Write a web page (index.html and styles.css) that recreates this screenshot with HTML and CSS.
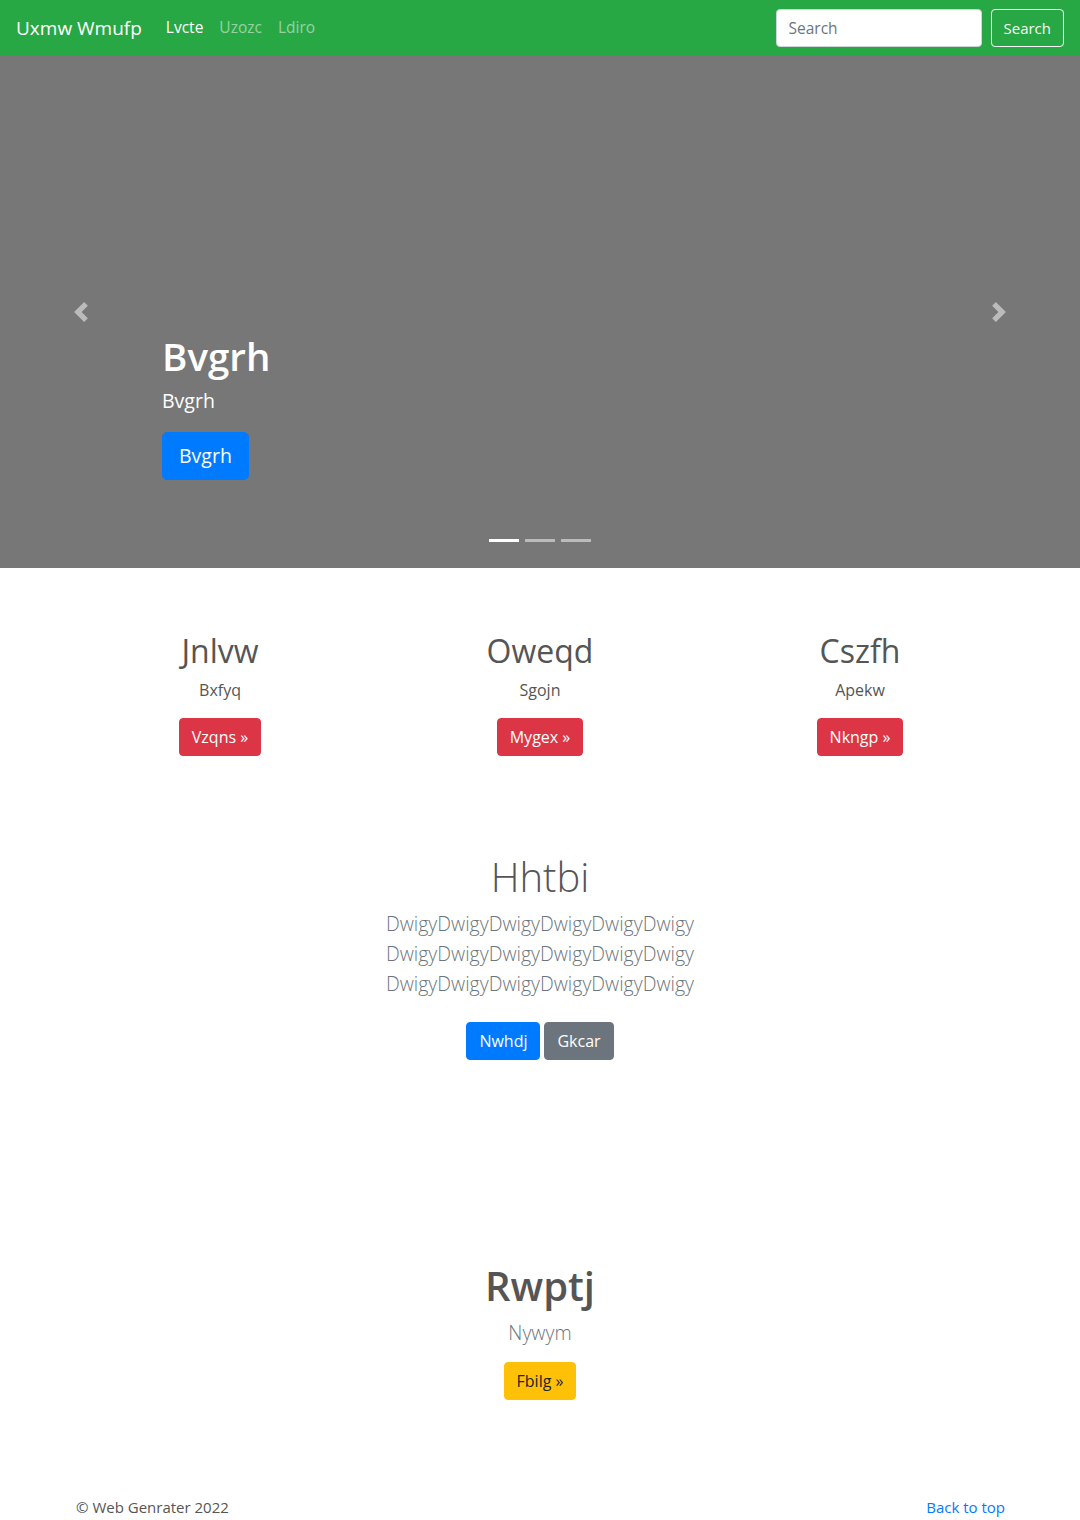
FILE: index.html
```html
<!DOCTYPE html>
<html lang="en">
<head>
<meta charset="utf-8">
<title>Uxmw Wmufp</title>
<link rel="stylesheet" href="styles.css">
</head>
<body>
<header class="navbar">
  <a class="brand" href="#">Uxmw Wmufp</a>
  <nav class="nav">
    <a class="nav-link active" href="#">Lvcte</a>
    <a class="nav-link" href="#">Uzozc</a>
    <a class="nav-link" href="#">Ldiro</a>
  </nav>
  <form class="search">
    <input class="search-input" type="text" placeholder="Search">
    <button class="btn btn-outline-light" type="button">Search</button>
  </form>
</header>

<section class="carousel">
  <div class="caption">
    <h1 class="caption-title">Bvgrh</h1>
    <p class="caption-text">Bvgrh</p>
    <a class="btn btn-lg btn-primary" href="#">Bvgrh</a>
  </div>
  <a class="control control-prev" href="#">
    <svg width="20" height="20" viewBox="0 0 8 8"><path fill="#fff" d="M5.25 0l-4 4 4 4 1.5-1.5L4.25 4l2.5-2.5L5.25 0z"/></svg>
  </a>
  <a class="control control-next" href="#">
    <svg width="20" height="20" viewBox="0 0 8 8"><path fill="#fff" d="M2.75 0l-1.5 1.5L3.75 4l-2.5 2.5L2.75 8l4-4-4-4z"/></svg>
  </a>
  <ol class="indicators">
    <li class="active"></li>
    <li></li>
    <li></li>
  </ol>
</section>

<main>
  <div class="container marketing">
    <div class="col">
      <h2 class="col-title">Jnlvw</h2>
      <p class="col-text">Bxfyq</p>
      <a class="btn btn-danger" href="#">Vzqns &raquo;</a>
    </div>
    <div class="col">
      <h2 class="col-title">Oweqd</h2>
      <p class="col-text">Sgojn</p>
      <a class="btn btn-danger" href="#">Mygex &raquo;</a>
    </div>
    <div class="col">
      <h2 class="col-title">Cszfh</h2>
      <p class="col-text">Apekw</p>
      <a class="btn btn-danger" href="#">Nkngp &raquo;</a>
    </div>
  </div>

  <section class="jumbotron">
    <div class="jumbo-inner">
      <h1 class="light-title">Hhtbi</h1>
      <p class="lead muted">DwigyDwigyDwigyDwigyDwigyDwigy DwigyDwigyDwigyDwigyDwigyDwigy DwigyDwigyDwigyDwigyDwigyDwigy</p>
      <p class="btn-row">
        <a class="btn btn-primary" href="#">Nwhdj</a>
        <a class="btn btn-secondary" href="#">Gkcar</a>
      </p>
    </div>
  </section>

  <section class="feature">
    <h1 class="feature-title">Rwptj</h1>
    <p class="lead muted">Nywym</p>
    <a class="btn btn-warning" href="#">Fbilg &raquo;</a>
  </section>
</main>

<footer class="footer">
  <div class="container footer-inner">
    <p class="copy">&copy; Web Genrater 2022</p>
    <a class="top-link" href="#">Back to top</a>
  </div>
</footer>
</body>
</html>
```

FILE: styles.css
```css
* { box-sizing: border-box; }

html, body {
  margin: 0;
  padding: 0;
}

body {
  font-family: "Open Sans", "Noto Sans", "Liberation Sans", sans-serif;
  font-size: 16px;
  line-height: 1.5;
  color: #555;
  background: #fff;
}

a { text-decoration: none; }

h1, h2, p { margin: 0; }

/* Navbar */
.navbar {
  height: 56px;
  background: #28a745;
  display: flex;
  align-items: center;
  padding: 8px 16px;
}

.brand {
  color: #fff;
  font-size: 19px;
  line-height: 30px;
  margin-right: 16px;
}

.nav {
  display: flex;
  flex: 1;
}

.nav-link {
  color: rgba(255, 255, 255, 0.5);
  padding: 8px;
  font-size: 15.5px;
}

.nav-link.active { color: #fff; }

.search {
  display: flex;
  align-items: center;
  gap: 9px;
}

.search-input {
  width: 206px;
  height: 38px;
  padding: 6px 12px;
  font-family: inherit;
  font-size: 15.5px;
  color: #495057;
  border: 1px solid #ced4da;
  border-radius: 4px;
  background: #fff;
}

.search-input::placeholder { color: #6c757d; }

/* Buttons */
.btn {
  display: inline-block;
  font-family: inherit;
  font-size: 16px;
  line-height: 24px;
  padding: 6px 12px;
  border: 1px solid transparent;
  border-radius: 4px;
  color: #fff;
  cursor: pointer;
}

.btn-lg {
  font-size: 19.5px;
  line-height: 30px;
  padding: 8px 16px;
  border-radius: 5px;
}

.btn-outline-light {
  background: transparent;
  border-color: #f8f9fa;
  color: #f8f9fa;
  font-size: 15px;
}

.btn-primary { background: #007bff; border-color: #007bff; }
.btn-secondary { background: #6c757d; border-color: #6c757d; }
.btn-danger { background: #dc3545; border-color: #dc3545; }
.btn-warning { background: #ffc107; border-color: #ffc107; color: #212529; }

/* Carousel */
.carousel {
  position: relative;
  height: 512px;
  background: #777;
  display: flex;
  flex-direction: column;
  justify-content: flex-end;
  padding: 0 15% 88px;
}

.caption { color: #fff; }

.caption-title {
  font-size: 38.5px;
  line-height: 48px;
  font-weight: 600;
  margin-bottom: 6px;
}

.caption-text {
  font-size: 19.5px;
  line-height: 30px;
  margin-bottom: 16px;
}

.control {
  position: absolute;
  top: 0;
  bottom: 0;
  width: 15%;
  display: flex;
  align-items: center;
  justify-content: center;
  opacity: 0.5;
}

.control-prev { left: 0; }
.control-next { right: 0; }

.indicators {
  position: absolute;
  left: 0;
  right: 0;
  bottom: 16px;
  margin: 0;
  padding: 0;
  list-style: none;
  display: flex;
  justify-content: center;
}

.indicators li {
  width: 30px;
  height: 23px;
  margin: 0 3px;
  border-top: 10px solid transparent;
  border-bottom: 10px solid transparent;
  background: #fff;
  background-clip: padding-box;
  opacity: 0.5;
}

.indicators li.active { opacity: 1; }

/* Container */
.container {
  max-width: 960px;
  margin: 0 auto;
  padding: 0 15px;
}

/* Marketing */
.marketing {
  display: flex;
  padding: 0;
  margin-top: 64px;
}

.col {
  flex: 1;
  padding: 0 15px;
  text-align: center;
  margin-bottom: 24px;
}

.col-title {
  font-size: 32px;
  line-height: 38px;
  font-weight: 500;
  margin-bottom: 8px;
}

.col-text {
  margin-bottom: 16px;
}

/* Jumbotron */
.jumbotron {
  padding: 73px 0 0;
  text-align: center;
}

.jumbo-inner {
  width: 450px;
  margin: 0 auto;
}

.light-title {
  font-size: 40px;
  line-height: 48px;
  font-weight: 300;
  margin-bottom: 8px;
}

.lead {
  font-size: 19.5px;
  line-height: 30px;
  font-weight: 300;
}

.muted { color: #6c757d; }

.jumbotron .lead { margin-bottom: 23px; }

.btn-row {
  margin: 0;
  display: flex;
  justify-content: center;
  gap: 4px;
}

/* Feature */
.feature {
  text-align: center;
  padding-top: 202px;
}

.feature-title {
  font-size: 40px;
  line-height: 48px;
  font-weight: 600;
  margin-bottom: 8px;
}

.feature .lead { margin-bottom: 14px; }

/* Footer */
.footer {
  padding: 96px 0 48px;
}

.footer-inner {
  display: flex;
  justify-content: space-between;
  align-items: flex-start;
}

.copy {
  font-size: 15px;
  margin-left: 1px;
}

.top-link {
  color: #007bff;
  font-size: 15px;
}
```
